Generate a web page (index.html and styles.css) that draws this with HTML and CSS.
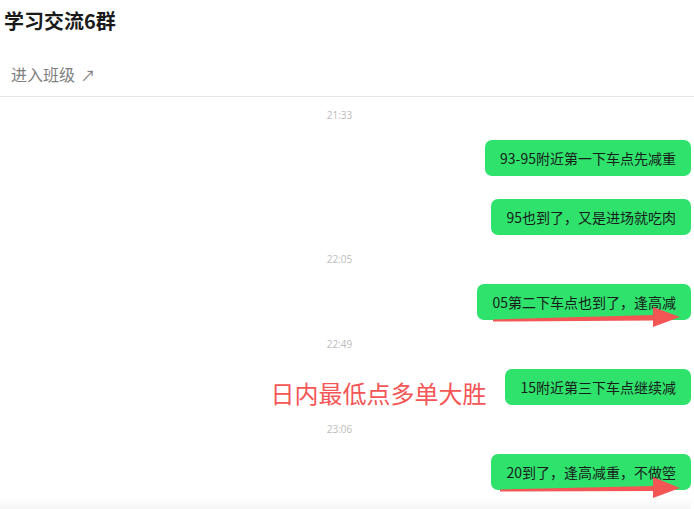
FILE: index.html
```html
<!DOCTYPE html>
<html lang="zh-CN">
<head>
	<meta charset="UTF-8">
	<title>学习交流6群</title>
	<link rel="stylesheet" href="styles.css">
</head>
<body>
<div class="head">
	<div class="title">学习交流6群</div>
	<div class="enter">进入班级 <span class="go">↗</span></div>
</div>
<div class="chat">
	<div class="time first">21:33</div>
	<div class="row"><div class="bubble">93-95附近第一下车点先减重</div></div>
	<div class="row next"><div class="bubble">95也到了，又是进场就吃肉</div></div>

	<div class="time">22:05</div>
	<div class="row">
		<div class="bubble">05第二下车点也到了，逢高减
			<svg class="arrow" width="200" height="30" viewBox="0 0 200 30">
				<polygon points="2,15.5 163,11 163,16.5 2,17.5" fill="#f45656"/>
				<polygon points="162,3 189,13 162,23" fill="#f45656"/>
			</svg>
		</div>
	</div>

	<div class="time">22:49</div>
	<div class="row">
		<div class="note">日内最低点多单大胜</div>
		<div class="bubble">15附近第三下车点继续减</div>
	</div>

	<div class="time">23:06</div>
	<div class="row">
		<div class="bubble">20到了，逢高减重，不做箜
			<svg class="arrow two" width="200" height="30" viewBox="0 0 200 30">
				<polygon points="2,15.5 156,12 156,17 2,17.5" fill="#f45656"/>
				<polygon points="155,3 182,14 155,24" fill="#f45656"/>
			</svg>
		</div>
	</div>
	<div class="foot"></div>
</div>
</body>
</html>
```
FILE: styles.css
```css
body{
	margin: 0;
	background: #fff;
	font-family: "Noto Sans CJK SC", "Noto Sans", sans-serif;
	color: #111;
}
.head{
	padding: 7px 0 0 0;
	border-bottom: 1px solid #e6e6e6;
}
.title{
	font-size: 20px;
	line-height: 28px;
	font-weight: bold;
	padding-left: 4px;
	color: #1a1a1a;
}
.enter{
	margin-top: 28px;
	padding: 0 0 10px 11px;
	font-size: 16px;
	line-height: 22px;
	color: #808080;
}
.go{
	font-size: 15px;
	margin-left: 2px;
}
.chat{
	padding: 0 3px 0 0;
}
.time{
	text-align: center;
	padding-right: 12px;
	font-size: 10px;
	line-height: 14px;
	color: #bbb;
	margin: 17px 0 18px;
	font-family: "Open Sans", sans-serif;
}
.time.first{
	margin-top: 11px;
}
.row{
	display: flex;
	justify-content: flex-end;
	align-items: center;
}
.row.next{
	margin-top: 23px;
}
.bubble{
	position: relative;
	background: #2ee26c;
	border-radius: 7px;
	padding: 8px 15px;
	font-size: 14px;
	line-height: 20px;
	color: #1b1b1b;
}
.note{
	font-size: 24px;
	line-height: 30px;
	color: #f45656;
	margin: 6px 19px -6px 0;
}
.arrow{
	position: absolute;
	left: 14px;
	top: 20px;
}
.arrow.two{
	left: 7px;
}
.foot{
	margin-top: 8px;
	height: 11px;
	background: linear-gradient(#fff, #f6f6f6);
}
```
